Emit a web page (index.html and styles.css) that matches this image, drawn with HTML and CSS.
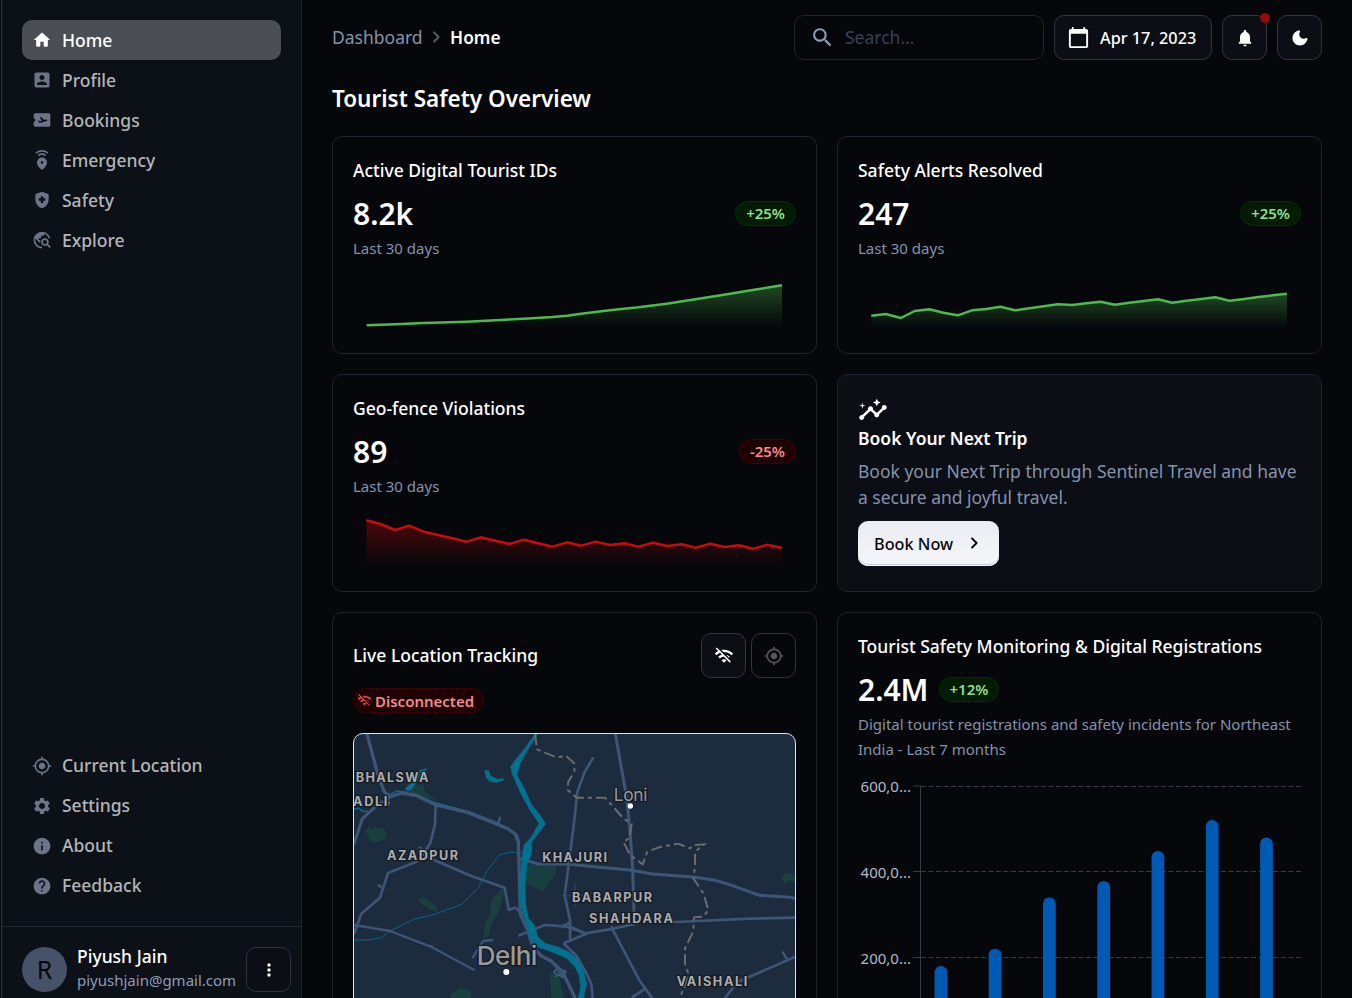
FILE: index.html
```html
<!DOCTYPE html>
<html lang="en">
<head>
<meta charset="utf-8">
<title>Tourist Safety Dashboard</title>
<link rel="stylesheet" href="styles.css">
</head>
<body>
<svg class="defs" aria-hidden="true">
  <symbol id="home" viewBox="0 0 24 24"><path d="M10 19v-5h4v5c0 .55.45 1 1 1h3c.55 0 1-.45 1-1v-7h1.7c.46 0 .68-.57.33-.87L12.67 3.6c-.38-.34-.96-.34-1.34 0l-8.36 7.53c-.34.3-.13.87.33.87H5v7c0 .55.45 1 1 1h3c.55 0 1-.45 1-1z"/></symbol>
  <symbol id="profile" viewBox="0 0 24 24"><path d="M3 5v14c0 1.1.89 2 2 2h14c1.1 0 2-.9 2-2V5c0-1.1-.9-2-2-2H5c-1.11 0-2 .9-2 2zm12 4c0 1.66-1.34 3-3 3s-3-1.34-3-3 1.34-3 3-3 3 1.34 3 3zm-9 8c0-2 4-3.1 6-3.1s6 1.1 6 3.1v1H6v-1z"/></symbol>
  <symbol id="ticket" viewBox="0 0 24 24"><path d="M20.19 4H4c-1.1 0-1.99.9-1.99 2v4c1.1 0 1.99.9 1.99 2s-.89 2-2 2v4c0 1.1.9 2 2 2h16.19c1 0 1.81-.9 1.81-2V6c0-1.1-.81-2-1.81-2zm-2.46 9.3-8.86 2.36-1.66-2.88.93-.25 1.26.99 2.39-.64-2.4-4.16 1.4-.38 4.01 3.74 2.44-.65c.51-.14 1.04.17 1.18.68.13.51-.17 1.04-.69 1.19z"/></symbol>
  <symbol id="emergency" viewBox="0 0 24 24"><path d="M12 9c-3.15 0-6 2.41-6 6.15 0 2.49 2 5.44 6 8.85 4-3.41 6-6.36 6-8.85C18 11.41 15.15 9 12 9zm0 7.5c-.83 0-1.5-.67-1.5-1.5s.67-1.5 1.5-1.5 1.5.67 1.5 1.5-.67 1.5-1.5 1.5zM12 4c1.93 0 3.68.78 4.95 2.05l-1.41 1.41C14.63 6.56 13.38 6 12 6s-2.63.56-3.54 1.46L7.05 6.05C8.32 4.78 10.07 4 12 4zm7.78-.77-1.41 1.41C16.74 3.01 14.49 2 12.01 2S7.27 3.01 5.64 4.64L4.22 3.22C6.22 1.23 8.97 0 12.01 0s5.79 1.23 7.77 3.23z"/></symbol>
  <symbol id="shield" viewBox="0 0 24 24"><path fill-rule="evenodd" d="M11.3 2.26l-6 2.25C4.52 4.81 4 5.55 4 6.39v4.7c0 5.05 3.41 9.76 8 10.91 4.59-1.15 8-5.86 8-10.91v-4.7c0-.83-.52-1.58-1.3-1.87l-6-2.25c-.45-.18-.95-.18-1.4-.01zM10.5 13H8v-3h2.5V7.5h3V10H16v3h-2.5v2.5h-3z"/></symbol>
  <symbol id="explore" viewBox="0 0 24 24"><path d="M19.3 16.9c.4-.7.7-1.5.7-2.4 0-2.5-2-4.5-4.5-4.5S11 12 11 14.5s2 4.5 4.5 4.5c.9 0 1.7-.3 2.4-.7l3.2 3.2 1.4-1.4-3.2-3.2zm-3.8.1c-1.4 0-2.5-1.1-2.5-2.5s1.1-2.5 2.5-2.5 2.5 1.1 2.5 2.5-1.1 2.5-2.5 2.5zM12 20v2C6.48 22 2 17.52 2 12S6.48 2 12 2c4.84 0 8.87 3.44 9.8 8h-2.07c-.64-2.46-2.4-4.47-4.73-5.41V5c0 1.1-.9 2-2 2h-2v2c0 .55-.45 1-1 1H8v2h2v3H9l-4.79-4.79C4.08 10.79 4 11.38 4 12c0 4.41 3.59 8 8 8z"/></symbol>
  <symbol id="locate" viewBox="0 0 24 24"><path d="M12 8c-2.21 0-4 1.79-4 4s1.79 4 4 4 4-1.79 4-4-1.79-4-4-4zm8.94 3c-.46-4.17-3.77-7.48-7.94-7.94V1h-2v2.06C6.83 3.52 3.52 6.83 3.06 11H1v2h2.06c.46 4.17 3.77 7.48 7.94 7.94V23h2v-2.06c4.17-.46 7.48-3.77 7.94-7.94H23v-2h-2.06zM12 19c-3.87 0-7-3.13-7-7s3.13-7 7-7 7 3.13 7 7-3.13 7-7 7z"/></symbol>
  <symbol id="settings" viewBox="0 0 24 24"><path d="M19.14 12.94c.04-.3.06-.61.06-.94 0-.32-.02-.64-.07-.94l2.03-1.58c.18-.14.23-.41.12-.61l-1.92-3.32c-.12-.22-.37-.29-.59-.22l-2.39.96c-.5-.38-1.03-.7-1.62-.94l-.36-2.54c-.04-.24-.24-.41-.48-.41h-3.84c-.24 0-.43.17-.47.41l-.36 2.54c-.59.24-1.13.57-1.62.94l-2.39-.96c-.22-.08-.47 0-.59.22L2.74 8.87c-.12.21-.08.47.12.61l2.03 1.58c-.05.3-.09.63-.09.94s.02.64.07.94l-2.03 1.58c-.18.14-.23.41-.12.61l1.92 3.32c.12.22.37.29.59.22l2.39-.96c.5.38 1.03.7 1.62.94l.36 2.54c.05.24.24.41.48.41h3.84c.24 0 .44-.17.47-.41l.36-2.54c.59-.24 1.13-.56 1.62-.94l2.39.96c.22.08.47 0 .59-.22l1.92-3.32c.12-.22.07-.47-.12-.61l-2.01-1.58zM12 15.6c-1.98 0-3.6-1.62-3.6-3.6s1.62-3.6 3.6-3.6 3.6 1.62 3.6 3.6-1.62 3.6-3.6 3.6z"/></symbol>
  <symbol id="info" viewBox="0 0 24 24"><path d="M12 2C6.48 2 2 6.48 2 12s4.48 10 10 10 10-4.48 10-10S17.52 2 12 2zm1 15h-2v-6h2v6zm0-8h-2V7h2v2z"/></symbol>
  <symbol id="help" viewBox="0 0 24 24"><path d="M12 2C6.48 2 2 6.48 2 12s4.48 10 10 10 10-4.48 10-10S17.52 2 12 2zm1 17h-2v-2h2v2zm2.07-7.75-.9.92C13.45 12.9 13 13.5 13 15h-2v-.5c0-1.1.45-2.1 1.17-2.83l1.24-1.26c.37-.36.59-.86.59-1.41 0-1.1-.9-2-2-2s-2 .9-2 2H8c0-2.21 1.79-4 4-4s4 1.79 4 4c0 .88-.36 1.68-.93 2.25z"/></symbol>
  <symbol id="wifi-off" viewBox="0 0 24 24"><path d="M22.99 9C19.15 5.16 13.8 3.76 8.84 4.78l2.52 2.52c3.47-.17 6.99 1.05 9.63 3.7l2-2zm-4 4c-1.29-1.29-2.84-2.13-4.49-2.56l3.53 3.53.96-.97zM2 3.05 5.07 6.1C3.6 6.82 2.22 7.78 1 9l1.99 2c1.24-1.24 2.67-2.16 4.2-2.77l2.24 2.24C7.81 10.89 6.27 11.73 5 13v.01L6.99 15c1.36-1.36 3.14-2.04 4.92-2.06L18.98 20l1.27-1.26L3.29 1.79 2 3.05zM9 17l3 3 3-3c-1.65-1.66-4.34-1.66-6 0z"/></symbol>
  <symbol id="insights" viewBox="0 0 24 24"><path d="M21 8c-1.45 0-2.26 1.44-1.93 2.51l-3.55 3.56c-.3-.09-.74-.09-1.04 0l-2.55-2.55C12.27 10.45 11.46 9 10 9c-1.45 0-2.27 1.44-1.93 2.52l-4.56 4.55C2.44 15.74 1 16.55 1 18c0 1.1.9 2 2 2 1.45 0 2.26-1.44 1.93-2.51l4.55-4.56c.3.09.74.09 1.04 0l2.55 2.55C12.73 16.55 13.54 18 15 18c1.45 0 2.27-1.44 1.93-2.52l3.56-3.55C21.56 12.26 23 11.45 23 10c0-1.1-.9-2-2-2z"/><path d="m15 9 .94-2.07L18 6l-2.06-.93L15 3l-.92 2.07L12 6l2.08.93zM3.5 11 4 9l2-.5L4 8l-.5-2L3 8l-2 .5L3 9z"/></symbol>
  <symbol id="search" viewBox="0 0 24 24"><path d="M15.5 14h-.79l-.28-.27C15.41 12.59 16 11.11 16 9.5 16 5.91 13.09 3 9.5 3S3 5.91 3 9.5 5.91 16 9.5 16c1.61 0 3.09-.59 4.23-1.57l.27.28v.79l5 4.99L20.49 19l-4.99-5zm-6 0C7.01 14 5 11.99 5 9.5S7.01 5 9.5 5 14 7.01 14 9.5 11.99 14 9.5 14z"/></symbol>
  <symbol id="calendar" viewBox="0 0 24 24"><path d="M20 3h-1V2c0-.55-.45-1-1-1s-1 .45-1 1v1H7V2c0-.55-.45-1-1-1s-1 .45-1 1v1H4c-1.1 0-2 .9-2 2v16c0 1.1.9 2 2 2h16c1.1 0 2-.9 2-2V5c0-1.1-.9-2-2-2zm0 18H4V8h16v13z"/></symbol>
  <symbol id="bell" viewBox="0 0 24 24"><path d="M12 22c1.1 0 2-.9 2-2h-4c0 1.1.89 2 2 2zm6-6v-5c0-3.07-1.63-5.64-4.5-6.32V4c0-.83-.67-1.5-1.5-1.5s-1.5.67-1.5 1.5v.68C7.64 5.36 6 7.92 6 11v5l-1.29 1.29c-.63.63-.19 1.71.7 1.71h13.17c.89 0 1.34-1.08.71-1.71L18 16z"/></symbol>
  <symbol id="moon" viewBox="0 0 24 24"><path d="M11.01 3.05C6.51 3.54 3 7.36 3 12c0 4.97 4.03 9 9 9 4.63 0 8.45-3.5 8.95-8 .09-.79-.78-1.42-1.54-.95-.84.54-1.84.85-2.91.85-2.98 0-5.4-2.42-5.4-5.4 0-1.06.31-2.06.84-2.89.45-.67-.04-1.63-.93-1.56z"/></symbol>
  <symbol id="dots" viewBox="0 0 24 24"><path d="M12 8c1.1 0 2-.9 2-2s-.9-2-2-2-2 .9-2 2 .9 2 2 2zm0 2c-1.1 0-2 .9-2 2s.9 2 2 2 2-.9 2-2-.9-2-2-2zm0 6c-1.1 0-2 .9-2 2s.9 2 2 2 2-.9 2-2-.9-2-2-2z"/></symbol>
  <symbol id="chevron" viewBox="0 0 24 24"><path d="M9.29 6.71c-.39.39-.39 1.02 0 1.41L13.17 12l-3.88 3.88c-.39.39-.39 1.02 0 1.41.39.39 1.02.39 1.41 0l4.59-4.59c.39-.39.39-1.02 0-1.41L10.7 6.7c-.38-.38-1.02-.38-1.41.01z"/></symbol>
  <linearGradient id="green-fade" x1="0" y1="0" x2="0" y2="1"><stop offset="0" stop-color="#4fbf50" stop-opacity=".36"/><stop offset="1" stop-color="#4fbf50" stop-opacity="0"/></linearGradient>
  <linearGradient id="red-fade" x1="0" y1="0" x2="0" y2="1"><stop offset="0" stop-color="#c80a0a" stop-opacity=".36"/><stop offset="1" stop-color="#c80a0a" stop-opacity="0"/></linearGradient>
</svg>

<div class="app">
  <aside class="sidebar">
    <nav class="menu">
      <a class="item active"><svg class="icon"><use href="#home"/></svg>Home</a>
      <a class="item"><svg class="icon"><use href="#profile"/></svg>Profile</a>
      <a class="item"><svg class="icon"><use href="#ticket"/></svg>Bookings</a>
      <a class="item"><svg class="icon"><use href="#emergency"/></svg>Emergency</a>
      <a class="item"><svg class="icon"><use href="#shield"/></svg>Safety</a>
      <a class="item"><svg class="icon"><use href="#explore"/></svg>Explore</a>
    </nav>
    <nav class="menu">
      <a class="item"><svg class="icon"><use href="#locate"/></svg>Current Location</a>
      <a class="item"><svg class="icon"><use href="#settings"/></svg>Settings</a>
      <a class="item"><svg class="icon"><use href="#info"/></svg>About</a>
      <a class="item"><svg class="icon"><use href="#help"/></svg>Feedback</a>
    </nav>
    <div class="account">
      <div class="avatar">R</div>
      <div class="who"><div class="name">Piyush Jain</div><div class="mail">piyushjain@gmail.com</div></div>
      <button class="square"><svg class="icon"><use href="#dots"/></svg></button>
    </div>
  </aside>

  <main class="main">
    <header class="topbar">
      <div class="crumbs"><span>Dashboard</span><svg class="icon crumb-sep"><use href="#chevron"/></svg><b>Home</b></div>
      <div class="tools">
        <div class="search"><svg class="icon"><use href="#search"/></svg><span>Search…</span></div>
        <button class="date"><svg class="icon"><use href="#calendar"/></svg>Apr 17, 2023</button>
        <button class="square"><svg class="icon"><use href="#bell"/></svg><i class="badge"></i></button>
        <button class="square"><svg class="icon"><use href="#moon"/></svg></button>
      </div>
    </header>
    <h1 class="heading">Tourist Safety Overview</h1>

    <div class="grid">
      <section class="card stat">
        <h2 class="title">Active Digital Tourist IDs</h2>
        <div class="figure"><span class="value">8.2k</span><span class="chip up">+25%</span></div>
        <div class="caption">Last 30 days</div>
        <svg class="spark" viewBox="99 804 1329 195" preserveAspectRatio="none">
          <path fill="url(#green-fade)" d="M140 976 L226 973 312 968 440 965 526 961 612 956 698 951 740 947 783 941 826 937 869 931 955 922 1040 911 1126 898 1212 884 1298 870 1386 856 V980 H140z"/>
          <polyline class="line green" points="140,976 226,973 312,969 440,965 526,961 612,956 698,951 740,947 783,941 826,936 869,931 955,922 1040,911 1126,898 1212,884 1298,870 1386,856"/>
        </svg>
      </section>

      <section class="card stat">
        <h2 class="title">Safety Alerts Resolved</h2>
        <div class="figure"><span class="value">247</span><span class="chip up">+25%</span></div>
        <div class="caption">Last 30 days</div>
        <svg class="spark" viewBox="112 414 1305.5 195" preserveAspectRatio="none">
          <path fill="url(#green-fade)" d="M151 557 L194 552 238 564 279 543 322 538 364 548 406 556 448 541 490 537 532 530 574 541 617 535 659 529 701 523 743 525 785 520 827 515 869 524 911 518 954 513 996 508 1038 518 1080 512 1123 507 1165 502 1207 512 1250 507 1292 501 1334 496 1376 491 V592 H151z"/>
          <polyline class="line green" points="151,557 194,552 238,564 279,543 322,538 364,548 406,556 448,541 490,537 532,530 574,541 617,535 659,529 701,523 743,525 785,520 827,515 869,524 911,518 954,513 996,508 1038,518 1080,512 1123,507 1165,502 1207,512 1250,507 1292,501 1334,496 1376,491"/>
        </svg>
      </section>

      <section class="card stat">
        <h2 class="title">Geo-fence Violations</h2>
        <div class="figure"><span class="value">89</span><span class="chip down">-25%</span></div>
        <div class="caption">Last 30 days</div>
        <svg class="spark" viewBox="99 408 1329 195" preserveAspectRatio="none">
          <path fill="url(#red-fade)" d="M139 451 L182 462 225 480 268 467 311 485 354 495 397 505 440 515 483 502 526 512 569 522 612 509 655 520 698 530 741 517 784 527 827 515 870 525 913 520 956 530 999 518 1042 528 1085 523 1128 533 1171 521 1214 531 1257 526 1300 536 1343 524 1386 534 V590 H139z"/>
          <polyline class="line red" points="139,451 182,462 225,480 268,467 311,485 354,495 397,505 440,515 483,502 526,512 569,522 612,509 655,520 698,530 741,517 784,527 827,515 870,525 913,520 956,530 999,518 1042,528 1085,523 1128,533 1171,521 1214,531 1257,526 1300,536 1343,524 1386,534"/>
        </svg>
      </section>

      <section class="card promo">
        <svg class="icon promo-icon"><use href="#insights"/></svg>
        <h2 class="title strong">Book Your Next Trip</h2>
        <p class="text">Book your Next Trip through Sentinel Travel and have a secure and joyful travel.</p>
        <button class="cta">Book Now<svg class="icon"><use href="#chevron"/></svg></button>
      </section>

      <section class="card tall">
        <div class="card-head">
          <h2 class="title">Live Location Tracking</h2>
          <div class="actions">
            <button class="square"><svg class="icon"><use href="#wifi-off"/></svg></button>
            <button class="square off"><svg class="icon"><use href="#locate"/></svg></button>
          </div>
        </div>
        <span class="chip down status"><svg class="icon"><use href="#wifi-off"/></svg>Disconnected</span>
        <div class="map">
          <svg viewBox="27 27 1323 1053" width="441" height="351">
            <g class="park">
              <path d="M60 315l12-8 8 8 10-9 10 6 10-7 8 10 8 14-4 12-22 10h-22z"/>
              <path d="M190 200l28-24 16 4 6 20 36 28-52-16z"/>
              <path d="M543 418l90 2-2 26-35 54-54-25z"/>
              <path d="M470 490l8 10-20 70-16 20-12 46-14 4 4-42 14-30 8-48 14-10z"/>
              <path d="M218 520l20-4 38 28 4 16-28-6-28-22z"/>
              <path d="M318 805l30-17 30 10v50h-60zM614 745l26 2 16 70 4 50h-36z"/>
              <path d="M1310 460l8-14 18-2 14 8v20l-18-4-12 8-8-8z"/>
            </g>
            <g class="stream">
              <path d="M27 645h40l42-7 30-22 70-34 60-14 80-30 50-48 26-50 18-24 20-26 30-8h36l28 14"/>
              <path stroke-width="4" d="M27 252l16-2 8 8 20 2M128 210l30-12 30 4M200 204l72 30 100 26 68 26 50 24 20 20 4 18"/>
            </g>
            <path class="water" d="M180 190l18-16 20-18 4-20 22-6v6l-16 8-4 16-24 34-16 4zM418 136l13 0 6 16 20 10 18-2 2 6-22 7-20-3-12-12z"/>
            <g class="road">
              <path stroke-width="10" d="M66 27l32 120 20 54 18 14 36-11 44 8 56 28 96 22 60 24 62 26 22 16 8 20 2 70 4 150 24 52 14 48 24 24 30 16 36 34 10 22 24 50 6 60"/>
              <path stroke-width="9" d="M136 217l-40 24-44 40-26 78"/>
              <path stroke-width="8" d="M272 238l-2 60-14 56-14 22M132 228l-2 14M440 288l18 10 8-22M222 366l18 14"/>
              <path stroke-width="8" d="M27 628l22-62 56-48 24-74 86-34 20-24 16 12 130 56 98 34 12 66 20-6 24 20M98 480l12 6"/>
              <path stroke-width="7" d="M27 600l108 18 120 46 134 72M382 700l32-52 30-3M255 666l8-4"/>
              <path stroke-width="8" d="M520 632l80-32 60 4 62 21 72-12 76-16"/>
              <path stroke-width="9" d="M520 400l56 16 100 2 80 8 98 9 70 12 126 10 56 8 48 14 90 32 90 6 36 7"/>
              <path stroke-width="9" d="M811 27l34 190 10 100 8 115 5 160"/>
              <path stroke-width="8" d="M745 97l-26 44-22 60-12 110-26 200 16 74v60M675 592l-25 14M655 655l40 38 30 54 14 30 6 60"/>
              <path stroke-width="8" d="M675 605l48 22-68 28M975 591h20l220-10 136-3M798 604l84 160 54 76M860 818l42-28M1140 819l38-48 146-64 26-12M1312 680l16 26"/>
              <path stroke-width="5" d="M626 742l12-14 26 12-10 18zM632 732l24 24M630 756l32-22"/>
              <path stroke-width="5" opacity=".4" d="M650 512h70M690 475v72"/>
            </g>
            <path class="river" d="M570 27L540 70 515 100 497 125 503 150 530 210 555 255 582 295 560 335 537 360 531 400 525 460 524 520 535 570 545 600 555 640 575 665 620 680 665 700 690 725 702 750 707 780 705 800 695 830 680 860H705L715 820 725 777 715 735 700 705 675 683 640 666 600 655 578 635 568 600 550 580 542 540 540 480 545 420 560 385 560 350 602 297 585 270 560 240 540 195 516 150 525 115 545 80 578 27z"/>
            <path class="border" d="M570 27L576 73 605 85 635 97 664 93 688 115 688 140 670 170 668 195 695 218 780 218 835 280 860 297 853 340 835 350 855 390 893 418 907 380 945 366 1000 356 1035 370 1045 360 1078 358 1050 380 1050 425 1045 460 1075 505 1090 555 1075 575 1047 577 1045 618 1020 670 1020 720 1030 745 1020 780 1000 830"/>
            <g class="place">
              <text x="32" y="171" textLength="218">BHALSWA</text>
              <text x="24" y="244" textLength="103">ADLI</text>
              <text x="126" y="406" textLength="213">AZADPUR</text>
              <text x="592" y="412" textLength="194">KHAJURI</text>
              <text x="681" y="532" textLength="240">BABARPUR</text>
              <text x="732" y="595" textLength="252">SHAHDARA</text>
              <text x="995" y="784" textLength="212">VAISHALI</text>
            </g>
            <g class="city"><text x="806" y="229" font-size="52" textLength="101">Loni</text><text class="capital" x="395" y="719" font-size="78" textLength="182">Delhi</text></g>
            <circle class="pin" cx="856" cy="243" r="8"/><circle class="pin" cx="484" cy="741" r="9"/>
          </svg>
        </div>
      </section>

      <section class="card tall">
        <h2 class="title">Tourist Safety Monitoring &amp; Digital Registrations</h2>
        <div class="figure start"><span class="value">2.4M</span><span class="chip up">+12%</span></div>
        <div class="caption">Digital tourist registrations and safety incidents for Northeast India - Last 7 months</div>
        <svg class="bars" width="443" height="320" viewBox="0 0 443 320">
          <path class="gridlines" d="M63 16.5H443M63 101.5H443M63 187.5H443"/>
          <path class="axis" d="M62.5 16V320M55 16h8M55 101.5h8M55 187.5h8"/>
          <g class="ticks"><text x="53" y="22">600,0...</text><text x="53" y="108">400,0...</text><text x="53" y="194">200,0...</text></g>
          <g class="bar">
            <rect x="76.6" y="196" width="12.8" height="140" rx="6.4"/><rect x="130.7" y="178.7" width="12.8" height="160" rx="6.4"/><rect x="185" y="127.4" width="12.8" height="200" rx="6.4"/><rect x="239.3" y="111" width="12.8" height="220" rx="6.4"/><rect x="293.5" y="81" width="12.8" height="260" rx="6.4"/><rect x="347.8" y="50" width="12.8" height="280" rx="6.4"/><rect x="402.1" y="67.4" width="12.8" height="270" rx="6.4"/>
          </g>
        </svg>
      </section>
    </div>
  </main>
</div>
</body>
</html>
```

FILE: styles.css
```css
* { box-sizing: border-box; }
body {
  margin: 0;
  height: 998px;
  overflow: hidden;
  background: #05070a;
  color: #fff;
  font-family: "Noto Sans", sans-serif;
  font-size: 17.5px;
  line-height: 26px;
}
h1, h2, p { margin: 0; font-weight: 400; }
button { font: inherit; color: #fff; padding: 0; }
.defs { position: absolute; width: 0; height: 0; }
.icon { width: 20px; height: 20px; fill: currentColor; flex: none; display: block; }

.app { display: flex; height: 998px; overflow: hidden; }

/* Sidebar */
.sidebar {
  width: 301px;
  margin-left: 1px;
  flex: none;
  display: flex;
  flex-direction: column;
  background: #0c1017;
  border-left: 1px solid #34373d;
  border-right: 1px solid #22262f;
}
.menu { padding: 20px 20px 0; }
.menu + .menu { margin-top: auto; padding: 0 20px 21px; }
.item {
  display: flex;
  align-items: center;
  gap: 10px;
  height: 40px;
  padding: 0 10px;
  border-radius: 10px;
  font-weight: 500;
  color: #b4b5b8;
}
.item .icon { color: #6c7489; }
.menu + .menu .icon { margin-top: 1px; }
.item.active { background: #4b4e55; color: #fff; }
.item.active .icon { color: #fff; }
.account {
  display: flex;
  align-items: center;
  height: 72px;
  padding: 14px 10px 0 20px;
  border-top: 1px solid #22262f;
}
.avatar {
  width: 45px;
  height: 45px;
  border-radius: 50%;
  background: #465269;
  color: #05070a;
  font-size: 25px;
  line-height: 45px;
  text-align: center;
}
.who { margin: 0 auto 2px 10px; }
.name { line-height: 24px; font-weight: 500; }
.mail { font-size: 15px; line-height: 25px; color: #8f9bb7; }
.square {
  position: relative;
  width: 45px;
  height: 45px;
  display: grid;
  place-items: center;
  background: #0b0e14;
  border: 1px solid #2e3646;
  border-radius: 10px;
}
.square.off { background: transparent; color: #53555a; }

/* Top bar */
.main { flex: 1; padding: 15px 30px 0; }
.topbar { display: flex; justify-content: space-between; align-items: center; height: 45px; }
.crumbs { display: flex; align-items: center; margin-bottom: 1px; color: #8692ad; }
.crumbs b { padding-top: 1px; font-size: 17.3px; line-height: 27px; font-weight: 600; color: #fff; }
.crumb-sep { width: 24px; height: 24px; margin: 0 2px 0 1.5px; color: #5b5e66; }
.tools { display: flex; gap: 10px; }
.search, .date { display: flex; align-items: center; height: 45px; border-radius: 10px; }
.search { width: 250px; padding: 0 0 1px 15px; gap: 10px; border: 1px solid #1f242e; color: #374157; }
.search .icon { width: 25px; height: 25px; color: #8f9bb7; }
.date {
  width: 158px;
  padding-left: 12px;
  gap: 10px;
  background: #0b0e14;
  border: 1px solid #2e3646;
  font-weight: 500;
  font-size: 16.25px;
  white-space: nowrap;
}
.date .icon { width: 23px; height: 23px; }
.badge {
  position: absolute;
  top: -3px;
  right: -4px;
  width: 10px;
  height: 10px;
  border-radius: 50%;
  background: #960a0a;
}
.heading { margin: 20px 0 19px; font-size: 22.5px; line-height: 37px; font-weight: 600; }

/* Cards */
.grid { display: grid; grid-template-columns: 485px 485px; gap: 20px; }
.card { border: 1px solid #1f232d; border-radius: 10px; padding: 20px; height: 218px; }
.card.tall { height: 520px; }
.title { font-size: 17.5px; line-height: 26px; font-weight: 500; }
.title.strong { font-weight: 600; }
.figure { display: flex; align-items: center; justify-content: space-between; height: 45px; margin-top: 8px; }
.figure.start { justify-content: flex-start; gap: 11px; }
.value { font-size: 30px; line-height: 45px; font-weight: 600; }
.caption { font-size: 15px; line-height: 25px; color: #8692ad; }
.chip {
  display: inline-flex;
  align-items: center;
  height: 25px;
  padding: 0 10px 1px;
  border: 1px solid;
  border-radius: 13px;
  font-size: 15px;
  line-height: 22px;
  font-weight: 600;
}
.start .chip { padding: 0 9.5px 1px 9px; }
.up { color: #8fdf90; background: #021b02; border-color: #062f07; }
.down { color: #f28b8b; background: #1f0101; border-color: #3b0405; }
.spark { display: block; width: 443px; height: 65px; margin-top: 7px; }
.line { fill: none; stroke-width: 2.5; vector-effect: non-scaling-stroke; stroke-linejoin: round; }
.green { stroke: #4fb950; }
.red { stroke: #c70c0e; }

.promo { background: #0b0e14; }
.promo-icon { width: 30px; height: 30px; }
.promo .text { margin: 7px 0 10px; line-height: 26.25px; color: #8692ad; }
.cta {
  display: flex;
  align-items: center;
  gap: 8.5px;
  width: 141px;
  height: 45px;
  padding: 2px 0 0 16px;
  border: 0;
  border-radius: 10px;
  background: linear-gradient(#e9ecf2, #f5f6fa);
  box-shadow: inset 0 -1px #fff, inset 0 -2px #c1cadd;
  color: #05070a;
  font-weight: 500;
  font-size: 16.25px;
}
.cta .icon { width: 24px; height: 24px; margin-top: -2px; }

/* Live location */
.card-head { display: flex; align-items: center; justify-content: space-between; height: 45px; }
.card-head .title { margin-bottom: 1px; }
.actions { display: flex; gap: 5px; }
.status { display: flex; width: 131px; margin-top: 10px; padding: 0 3px; gap: 3px; }
.status .icon { width: 15px; height: 15px; margin-bottom: 1px; color: #e64545; }
.map { margin-top: 20px; height: 353px; border: 1px solid #dfe2e8; border-radius: 10px; overflow: hidden; background: #1d2b3e; }
.map svg { display: block; }
.park { fill: #19403f; }
.stream { fill: none; stroke: #076f91; stroke-width: 2.5; }
.water, .river { fill: #02708f; }
.river { stroke: #02708f; stroke-width: 2; }
.road { fill: none; stroke: #3d5577; stroke-linejoin: round; }
.border { fill: none; stroke: #6b6b6b; stroke-width: 6; stroke-dasharray: 34 12 12 12; }
.place, .city { fill: #acacac; stroke: #141a22; stroke-width: 8; stroke-linejoin: round; paint-order: stroke; font-family: Inter, sans-serif; }
.place { font-size: 38px; font-weight: 700; }
.city { fill: #999; }
.capital { font-weight: 500; }
.pin { fill: #fff; }

/* Bar chart */
.bars { display: block; margin-top: 8px; }
.gridlines { fill: none; stroke: #333b4d; stroke-dasharray: 5 2.5; }
.axis { fill: none; stroke: #333b4d; }
.ticks { fill: #b3b9c6; font-size: 15px; text-anchor: end; }
.bar { fill: #0059b3; }
```
